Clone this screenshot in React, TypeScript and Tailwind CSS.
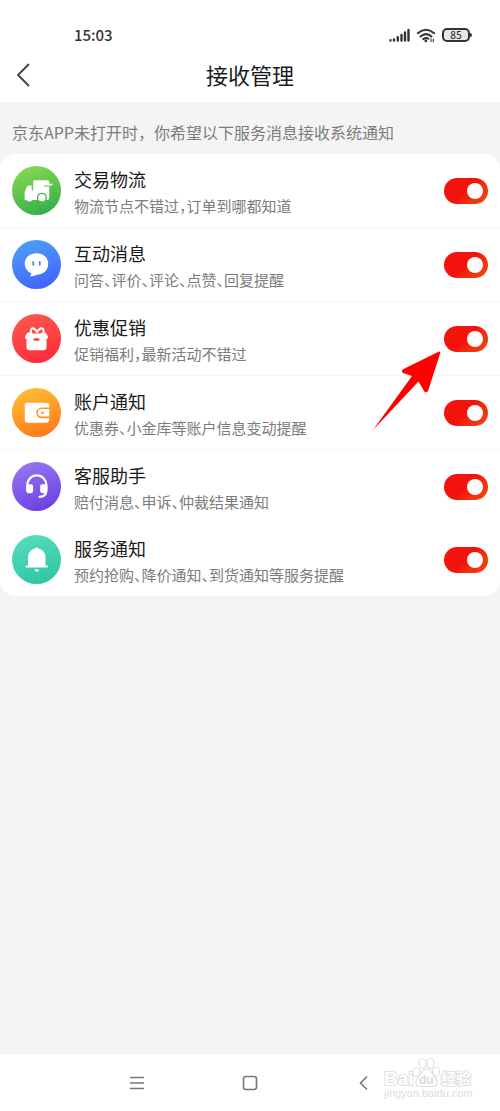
import React, { useState } from "react";

type Channel = {
  id: string;
  title: string;
  desc: string;
  circle: string;
  icon: React.ReactNode;
  divider: boolean;
};

const TruckIcon = () => (
  <svg viewBox="0 0 48 48" className="size-full" aria-hidden="true">
    <path d="M22 14h13q1.500 0 1.500 1.500v2h3.200v1.600h-3.200v11.700q0 2.500-2.500 2.500H20a3.300 3.300 0 0 1-5.400.2q-2.300.3-2.300-1.500v-6l1.700-4.800q.6-2.200 2.500-2.200h2.800v5h1.400v-8.500q0-1.500 1.300-1.500z" fill="#fff" />
    <path d="M31.500 19.600h5" stroke="#5cc454" strokeWidth="1" />
    <circle cx="29.300" cy="31" r="4.900" fill="#3fba4d" />
    <circle cx="29.300" cy="31" r="3.600" fill="#fff" />
  </svg>
);

const ChatIcon = () => (
  <svg viewBox="0 0 48 48" className="size-full" aria-hidden="true">
    <path d="M24 13c6.800 0 11.500 4.300 11.500 10.300S31 34 24.500 34c-2.200 1.200-4.500 1.500-7.200 1.500 1-.7 1.700-1.700 1.700-2.800-4-1.700-6.500-5.200-6.500-9.400C12.500 17.300 17.200 13 24 13z" fill="#fff" />
    <path d="M20.800 21.500v2.800M27.200 21.500v2.800" stroke="#4d83f5" strokeWidth="1.800" strokeLinecap="round" />
  </svg>
);

const GiftIcon = () => (
  <svg viewBox="0 0 48 48" className="size-full" aria-hidden="true">
    <path d="M18.200 19.500l.5-4q.6-2 2.600-1.400l3.700 3.400M24 17.500l3.800-3.400q2.300-.6 2.800 1.400l.8 4" fill="none" stroke="#fff" strokeWidth="2" strokeLinejoin="round" strokeLinecap="round" />
    <path d="M16.200 18.200h3l1.200 1h7.800l1.200-1h2.400q1.200 0 1.800 1l1.900 3.500-1.700 2.300v7.500q0 3-3 3H17.200q-3 0-3-3V25l-1.700-2.300 1.900-3.500q.6-1 1.800-1z" fill="#fff" />
    <rect x="21" y="23.800" width="6" height="2.400" rx="1.200" fill="#fc4345" />
  </svg>
);

const WalletIcon = () => (
  <svg viewBox="0 0 48 48" className="size-full" aria-hidden="true">
    <path d="M15.500 14.500h18q3 0 3 3V19h-7.500a5.300 5.300 0 0 0 0 10.600h7.500V31q0 3-3 3h-18q-3 0-3-3V17.500q0-3 3-3z" fill="#fff" />
    <path d="M29 20.500h7.500v7.500H29a3.750 3.750 0 0 1 0-7.500z" fill="#fff" />
    <rect x="28.300" y="23.300" width="3.200" height="2" rx="1" fill="#ff962a" />
  </svg>
);

const HeadsetIcon = () => (
  <svg viewBox="0 0 48 48" className="size-full" aria-hidden="true">
    <path d="M15 26v-3.500a9.300 9.300 0 0 1 18.600 0V28q0 6-6.600 6.200" fill="none" stroke="#fff" strokeWidth="2.200" strokeLinecap="round" />
    <rect x="13.900" y="21.800" width="6.800" height="8.700" rx="2" fill="#fff" />
    <rect x="27.600" y="21.800" width="7" height="8.700" rx="2" fill="#fff" />
  </svg>
);

const BellIcon = () => (
  <svg viewBox="0 0 48 48" className="size-full" fill="#fff" aria-hidden="true">
    <path d="M15.800 29.800V21.500a8.500 8.500 0 0 1 17 0v8.300h1.500a1 1 0 0 1 0 2H14.300a1 1 0 0 1 0-2z" />
    <circle cx="24.300" cy="14" r="1.800" />
    <rect x="22.300" y="33.500" width="4" height="2.200" rx="1.100" />
  </svg>
);

const channels: Channel[] = [
  { id: "trade", title: "交易物流", desc: "物流节点不错过，订单到哪都知道", circle: "from-[#8cdc52] to-[#18ac48]", icon: <TruckIcon />, divider: true },
  { id: "interact", title: "互动消息", desc: "问答、评价、评论、点赞、回复提醒", circle: "from-[#4fa3f5] to-[#4558fb]", icon: <ChatIcon />, divider: true },
  { id: "promo", title: "优惠促销", desc: "促销福利，最新活动不错过", circle: "from-[#fc5850] to-[#fe2139]", icon: <GiftIcon />, divider: true },
  { id: "account", title: "账户通知", desc: "优惠券、小金库等账户信息变动提醒", circle: "from-[#ffc236] to-[#ff7019]", icon: <WalletIcon />, divider: true },
  { id: "support", title: "客服助手", desc: "赔付消息、申诉、仲裁结果通知", circle: "from-[#9c79f3] to-[#6638e0]", icon: <HeadsetIcon />, divider: false },
  { id: "service", title: "服务通知", desc: "预约抢购、降价通知、到货通知等服务提醒", circle: "from-[#57dfc0] to-[#28c3a0]", icon: <BellIcon />, divider: false },
];

function StatusBar() {
  return (
    <div className="flex h-[50px] items-end justify-between pr-[28px] pb-1 pl-[74px]">
      <span className="text-[15px] leading-[22px] font-medium text-[#333]">15:03</span>
      <div className="flex h-[22px] items-center gap-[6px]">
        <svg width="21" height="14" viewBox="0 0 21 14" stroke="#333" strokeWidth="2.400" strokeLinecap="round" aria-hidden="true">
          <path d="M1.500 12.500v-.2M5 12.500v-1M8.800 12.500V9.300M12.500 12.500V7M16 12.500V4.500M19.500 12.500V2" />
        </svg>
        <svg width="20" height="15" viewBox="0 0 22 16" fill="none" stroke="#333" strokeWidth="2.200" strokeLinecap="round" aria-hidden="true">
          <path d="M2 5.500q9-7.500 18 0M5 9q6-5 12 0M8 12q3-2.300 5.500-.5" />
          <circle cx="10.800" cy="14" r="1.500" fill="#333" stroke="none" />
          <path d="M16.500 11.500v3M19 12v3" strokeWidth="1.200" />
        </svg>
        <div className="flex items-center">
          <span className="flex h-[14px] w-[28px] items-center justify-center rounded-[5px] border-2 border-[#333] bg-[#e8e8e8] text-[10px] leading-[10px] font-medium text-[#333]">
            85
          </span>
          <span className="h-1 w-[2px] rounded-r-sm bg-[#333]" />
        </div>
      </div>
    </div>
  );
}

function PointerArrow() {
  return (
    <svg className="pointer-events-none absolute top-[49px] right-[59px]" width="69" height="80" viewBox="0 0 69 80" aria-hidden="true">
      <path d="M67 .5q1.500-.3 1.300 1.500L56 40q-2 2.500-4 0l-5.500-9.500L1 79 40 25l-9-3q-2.500-2 .5-4z" fill="#fe0000" />
    </svg>
  );
}

function Watermark() {
  return (
    <svg className="pointer-events-none absolute top-0 right-[22px]" width="98" height="50" viewBox="0 0 98 50" aria-hidden="true">
      <g fill="#fff" stroke="#dedede" strokeWidth="1.200">
        <ellipse cx="36.500" cy="18" rx="3.500" ry="4.500" />
        <ellipse cx="42.500" cy="9.500" rx="3.500" ry="5" />
        <ellipse cx="50.500" cy="9.500" rx="3.500" ry="5" />
        <ellipse cx="56" cy="17.500" rx="3.500" ry="4.500" />
        <path d="M46.500 15c4 0 5 4 8 7.500s5 10-2 10h-12c-7 0-5-6.500-2-10s4-7.500 8-7.500z" />
      </g>
      <g fill="#fff" stroke="#dadada" strokeWidth="1.600" paintOrder="stroke" fontFamily="'Liberation Sans', 'Noto Sans CJK SC', sans-serif" fontWeight="bold">
        <text x="4" y="31" fontSize="19">Bai</text>
        <text x="61" y="30" fontSize="15">经验</text>
      </g>
      <text x="39" y="30" fontSize="12" fill="#dadada" fontFamily="'Liberation Sans', sans-serif" fontWeight="bold">du</text>
      <text x="4" y="43" fontSize="11" fill="#dcdcdc" fontFamily="'Liberation Sans', sans-serif">jingyan.baidu.com</text>
    </svg>
  );
}

export default function App() {
  const [enabled, setEnabled] = useState<Record<string, boolean>>({
    trade: true,
    interact: true,
    promo: true,
    account: true,
    support: true,
    service: true,
  });

  const toggle = (id: string) => setEnabled((prev) => ({ ...prev, [id]: !prev[id] }));

  return (
    <div className="flex min-h-screen flex-col bg-[#f4f4f4] font-['Noto_Sans_CJK_SC',sans-serif]">
      <header className="bg-white">
        <StatusBar />
        <div className="grid h-[52px] grid-cols-[48px_1fr_48px] items-start">
          <button type="button" aria-label="返回" className="flex h-[50px] items-center pl-4">
            <svg width="14" height="24" viewBox="0 0 14 24" fill="none" stroke="#3b3f4c" strokeWidth="1.800" strokeLinecap="round" aria-hidden="true">
              <path d="M12.500 1.500 2 12l10.500 10.500" />
            </svg>
          </button>
          <h1 className="text-center text-[22px] leading-[48px] text-[#1a1a1a]">接收管理</h1>
        </div>
      </header>

      <main className="flex-1">
        <p className="px-3 pt-[18px] pb-[10px] text-[16px] leading-6 text-[#7c7c7c]">
          京东APP未打开时，你希望以下服务消息接收系统通知
        </p>

        <ul className="rounded-2xl bg-white">
          {channels.map((item) => (
            <li key={item.id} className={`relative ${item.divider ? "border-b border-[#f5f5f5]" : ""}`}>
              <div className="flex h-[73px] items-center px-3">
                <div className={`size-[49px] shrink-0 rounded-full bg-linear-160 ${item.circle}`}>{item.icon}</div>
                <label htmlFor={item.id} className="ml-[13px] flex-1 pt-[2px]">
                  <span className="block text-[18px] leading-7 text-[#1a1a1a]">{item.title}</span>
                  <span className="block text-[15px] leading-[26px] text-[#7c7c7c] [font-feature-settings:'halt']">{item.desc}</span>
                </label>
                <input
                  id={item.id}
                  type="checkbox"
                  role="switch"
                  checked={enabled[item.id]}
                  onChange={() => toggle(item.id)}
                  className="flex h-[26px] w-[44px] shrink-0 appearance-none items-center rounded-full bg-[#ccc] px-[5px] before:size-4 before:rounded-full before:bg-white checked:justify-end checked:bg-linear-135 checked:from-[#f2140c] checked:from-50% checked:to-[#f2460f]"
                />
              </div>
              {item.id === "promo" && <PointerArrow />}
            </li>
          ))}
        </ul>
      </main>

      <nav className="relative grid h-[58px] grid-cols-[1fr_212px_1fr] border-t border-[#ececec] bg-white">
        <button type="button" aria-label="最近任务" className="flex items-center justify-end">
          <svg width="14" height="14" viewBox="0 0 14 14" stroke="#777" strokeWidth="1.500" aria-hidden="true">
            <path d="M0 1.500h14M0 7h14M0 12.500h14" />
          </svg>
        </button>
        <button type="button" aria-label="主屏幕" className="flex items-center justify-center">
          <svg width="16" height="16" viewBox="0 0 16 16" fill="none" stroke="#777" strokeWidth="1.600" aria-hidden="true">
            <rect x="1.500" y="1.500" width="13" height="13" rx="2.500" />
          </svg>
        </button>
        <button type="button" aria-label="返回上一页" className="flex items-center justify-start pl-[3px]">
          <svg width="9" height="16" viewBox="0 0 9 16" fill="none" stroke="#777" strokeWidth="1.600" aria-hidden="true">
            <path d="M8 1.500 1.500 8 8 14.500" />
          </svg>
        </button>
        <Watermark />
      </nav>
    </div>
  );
}
